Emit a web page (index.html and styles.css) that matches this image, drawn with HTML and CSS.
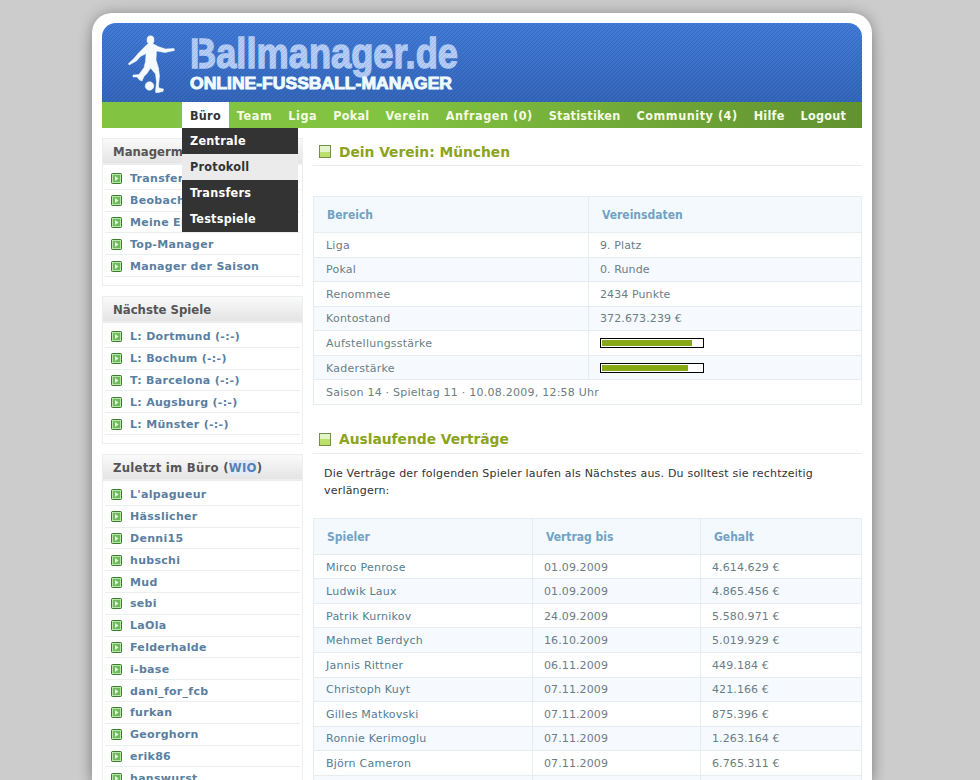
FILE: index.html
```html
<!DOCTYPE html>
<html lang="de">
<head>
<meta charset="utf-8">
<title>Ballmanager.de</title>
<link rel="stylesheet" href="styles.css">
</head>
<body>
<svg class="defs" width="0" height="0"><defs>
<symbol id="arrow" viewBox="0 0 11 11"><rect x=".5" y=".5" width="10" height="10" rx="1" fill="#6dbb5c" stroke="#3b7a30"/><rect x="1.500" y="1.500" width="8" height="8" fill="none" stroke="#b9e5aa"/><path d="M4 3v5l3.500-2.500z" fill="#e6f8df"/></symbol>
</defs></svg>
<div class="page">
<header class="banner">
<svg class="player" viewBox="0 0 50 58" width="50" height="58"><ellipse cx="24.500" cy="5" rx="3.500" ry="4.200"/><path d="M21.500 9h6l4.500 2.500 7.500 2.500 8.500-.5.500 2-9.500 2-8.500-1.500-.5 9 2.500 8 1 8-1 10 .5 2 4.500 1-.5 2.500-7 1.500-.5-2 1-9-1-8-5-6-3.500 5.500-3 3-2 4.500-2.500-1-2.500-3-4 0 0-2 6-.5 5-7 1.500-6 .5-8-5.500 3-4 4.500-7.500 4-.5-1.500 5-4.500 5-6z"/><circle cx="23.500" cy="51" r="4.300"/></svg>
<div class="brand">
<svg class="name" width="274" height="40"><defs><pattern id="g" width="4" height="4" patternUnits="userSpaceOnUse"><rect width="4" height="4" fill="#a9c3f2"/><path d="M0 4L4 0" stroke="#c2d6f8" stroke-width="1"/></pattern></defs><text x="1" y="33" textLength="268" lengthAdjust="spacingAndGlyphs" fill="url(#g)" stroke="url(#g)">Ballmanager.de</text><path d="M9.500 1v34" stroke="#3d74cd" stroke-width="1.500"/></svg>
<svg class="claim" width="274" height="20"><text x="1" y="15" textLength="262" lengthAdjust="spacingAndGlyphs">ONLINE-FUSSBALL-MANAGER</text></svg>
</div>
</header>
<nav class="nav">
<div class="item active"><span>Büro</span><div class="menu"><a>Zentrale</a><a class="hover">Protokoll</a><a>Transfers</a><a>Testspiele</a></div></div>
<div class="item wide">Team</div><div class="item wide">Liga</div><div class="item">Pokal</div><div class="item wide">Verein</div><div class="item count">Anfragen (0)</div><div class="item">Statistiken</div><div class="item count">Community (4)</div><div class="item">Hilfe</div><div class="item">Logout</div>
</nav>
<div class="columns">
<aside class="side">
<section class="box"><h3>Managerm</h3><ul><li><svg><use href="#arrow"/></svg>Transfer</li><li><svg><use href="#arrow"/></svg>Beobach</li><li><svg><use href="#arrow"/></svg>Meine Ei</li><li><svg><use href="#arrow"/></svg>Top-Manager</li><li><svg><use href="#arrow"/></svg>Manager der Saison</li></ul></section>
<section class="box"><h3>Nächste Spiele</h3><ul><li><svg><use href="#arrow"/></svg>L: Dortmund (-:-)</li><li><svg><use href="#arrow"/></svg>L: Bochum (-:-)</li><li><svg><use href="#arrow"/></svg>T: Barcelona (-:-)</li><li><svg><use href="#arrow"/></svg>L: Augsburg (-:-)</li><li><svg><use href="#arrow"/></svg>L: Münster (-:-)</li></ul></section>
<section class="box online"><h3>Zuletzt im Büro (<a>WIO</a>)</h3><ul><li><svg><use href="#arrow"/></svg>L'alpagueur</li><li><svg><use href="#arrow"/></svg>Hässlicher</li><li><svg><use href="#arrow"/></svg>Denni15</li><li><svg><use href="#arrow"/></svg>hubschi</li><li><svg><use href="#arrow"/></svg>Mud</li><li><svg><use href="#arrow"/></svg>sebi</li><li><svg><use href="#arrow"/></svg>LaOla</li><li><svg><use href="#arrow"/></svg>Felderhalde</li><li><svg><use href="#arrow"/></svg>i-base</li><li><svg><use href="#arrow"/></svg>dani_for_fcb</li><li><svg><use href="#arrow"/></svg>furkan</li><li><svg><use href="#arrow"/></svg>Georghorn</li><li><svg><use href="#arrow"/></svg>erik86</li><li><svg><use href="#arrow"/></svg>hanswurst</li></ul></section>
</aside>
<main class="main">
<h2>Dein Verein: München</h2>
<table class="club">
<tr><th>Bereich</th><th>Vereinsdaten</th></tr>
<tr><td>Liga</td><td>9. Platz</td></tr>
<tr><td>Pokal</td><td>0. Runde</td></tr>
<tr><td>Renommee</td><td>2434 Punkte</td></tr>
<tr><td>Kontostand</td><td>372.673.239 €</td></tr>
<tr><td>Aufstellungsstärke</td><td><div class="bar"><i style="width:90px"></i></div></td></tr>
<tr><td>Kaderstärke</td><td><div class="bar"><i style="width:86px"></i></div></td></tr>
<tr><td colspan="2">Saison 14 · Spieltag 11 · 10.08.2009, 12:58 Uhr</td></tr>
</table>
<h2 class="second">Auslaufende Verträge</h2>
<p>Die Verträge der folgenden Spieler laufen als Nächstes aus. Du solltest sie rechtzeitig<br>verlängern:</p>
<table class="deals">
<tr><th>Spieler</th><th>Vertrag bis</th><th>Gehalt</th></tr>
<tr><td>Mirco Penrose</td><td>01.09.2009</td><td>4.614.629 €</td></tr>
<tr><td>Ludwik Laux</td><td>01.09.2009</td><td>4.865.456 €</td></tr>
<tr><td>Patrik Kurnikov</td><td>24.09.2009</td><td>5.580.971 €</td></tr>
<tr><td>Mehmet Berdych</td><td>16.10.2009</td><td>5.019.929 €</td></tr>
<tr><td>Jannis Rittner</td><td>06.11.2009</td><td>449.184 €</td></tr>
<tr><td>Christoph Kuyt</td><td>07.11.2009</td><td>421.166 €</td></tr>
<tr><td>Gilles Matkovski</td><td>07.11.2009</td><td>875.396 €</td></tr>
<tr><td>Ronnie Kerimoglu</td><td>07.11.2009</td><td>1.263.164 €</td></tr>
<tr><td>Björn Cameron</td><td>07.11.2009</td><td>6.765.311 €</td></tr>
<tr><td></td><td></td><td></td></tr>
</table>
</main>
</div>
</div>
</body>
</html>
```
FILE: styles.css
```css
*, *::before { box-sizing: border-box; }
html, body { height: 780px; overflow: hidden; }
body { margin: 0; background: #ccc; font-family: "DejaVu Sans", Verdana, sans-serif; font-size: 11px; padding: 13px 0 0 92px; }
.defs { display: none; }
.page { width: 780px; height: 767px; padding: 10px 10px 0; background: #fff; border-radius: 20px 20px 0 0; box-shadow: 0 0 14px rgba(0,0,0,.3), 0 14px 14px rgba(0,0,0,.15); }
.banner { height: 79px; border-radius: 14px 14px 0 0; display: flex; padding: 12px 0 0 24px; background: repeating-linear-gradient(135deg, rgba(15,45,110,.2) 0 1px, transparent 1px 2.83px), linear-gradient(#427cd8, #3567bb); }
.player { fill: #f4faff; stroke: #f4faff; stroke-width: .5px; }
.brand { display: flex; flex-direction: column; margin-left: 13px; }
.brand svg { display: block; overflow: visible; }
.name { margin-top: 0; }
.name text { font: bold 42px "Liberation Sans", Arial, sans-serif; stroke-width: 1.4px; }
.claim { margin-top: -1px; }
.claim text { font: bold 16px "Liberation Sans", Arial, sans-serif; fill: #f0fbff; stroke: #f0fbff; stroke-width: .9px; }
.nav { height: 26px; display: flex; padding-left: 80px; background: linear-gradient(90deg, #82c341 0 38%, #659732 92%, #62922f); color: #f6fbe4; font: bold 12.5px/27px "DejaVu Sans Condensed", sans-serif; letter-spacing: .25px; white-space: nowrap; }
.item { height: 26px; padding: 0 8px; }
.wide { letter-spacing: .6px; }
.count { letter-spacing: .55px; }
.active { position: relative; background: #fff; color: #333; }
.menu { position: absolute; z-index: 2; left: 0; top: 26px; width: 116px; background: #333; color: #fff; }
.menu a { display: block; height: 26px; padding-left: 8px; line-height: 26px; }
.menu .hover { background: #ebebeb; color: #333; }
.columns { display: flex; gap: 10px; padding-top: 10px; }
.side { width: 201px; height: 642px; overflow: hidden; }
.box { border: 1px solid #ebeff0; margin-bottom: 10px; padding-bottom: 9px; }
.box h3 { margin: 0; height: 26px; padding-left: 10px; font: bold 13px/26px "DejaVu Sans Condensed", sans-serif; color: #555; background: linear-gradient(#fafafa, #e4e4e4); border-bottom: 2px solid #eee; }
.online h3 { letter-spacing: .25px; }
.box h3 a { color: #5580b8; background: #e4ebf5; }
.box ul { list-style: none; margin: 0; padding: 3px 2px 0; margin-bottom: -1px; }
.box li { height: 21.8px; border-bottom: 1px solid #ebeff0; display: flex; align-items: center; color: #5a7fa2; font-weight: bold; line-height: 21px; padding: 1px 0 0 6px; letter-spacing: .3px; }
.box li svg { width: 11px; height: 11px; margin-right: 8px; }
.main { width: 549px; }
h2 { margin: 0; height: 28px; padding: 0 0 0 6px; display: flex; align-items: center; font: bold 13.8px/28px "DejaVu Sans", sans-serif; color: #8ba31e; border-bottom: 1px solid #e8ecee; }
h2::before { content: ""; width: 12px; height: 13px; margin-right: 8px; border: 1px solid #71904c; background: linear-gradient(#e3f4c6 50%, #bcdf6c 50%); }
h2.second { margin-top: 21px; }
p { margin: 11px 0 19px 11px; line-height: 17px; color: #333; white-space: nowrap; letter-spacing: .2px; }
table { width: 549px; border-collapse: collapse; table-layout: fixed; color: #6b7d85; }
.club { margin-top: 30px; }
th { height: 36px; padding: 1px 13px 0; text-align: left; font: bold 12px "DejaVu Sans Condensed", sans-serif; color: #73a2c3; background: #f3f9fd; border: 1px solid #e6edf1; }
td { height: 24.55px; padding: 1px 11px 0; border-bottom: 1px solid #e6edf1; border-left: 1px solid #e6edf1; border-right: 1px solid #e6edf1; white-space: nowrap; letter-spacing: .1px; }
td:first-child { letter-spacing: .24px; padding-left: 12px; }
tr:nth-child(odd) td { background: #f6fafe; }
.club tr:last-child td { background: #fff; }
.club th:first-child { width: 275px; }
.bar { width: 104px; height: 10px; border: 1px solid #000; background: #fff; padding: 1px; }
.bar i { display: block; height: 6px; background: #88a916; }
.deals th:nth-child(1) { width: 219px; }
.deals th:nth-child(2) { width: 168px; }
.deals td:first-child { color: #557d91; }
```
